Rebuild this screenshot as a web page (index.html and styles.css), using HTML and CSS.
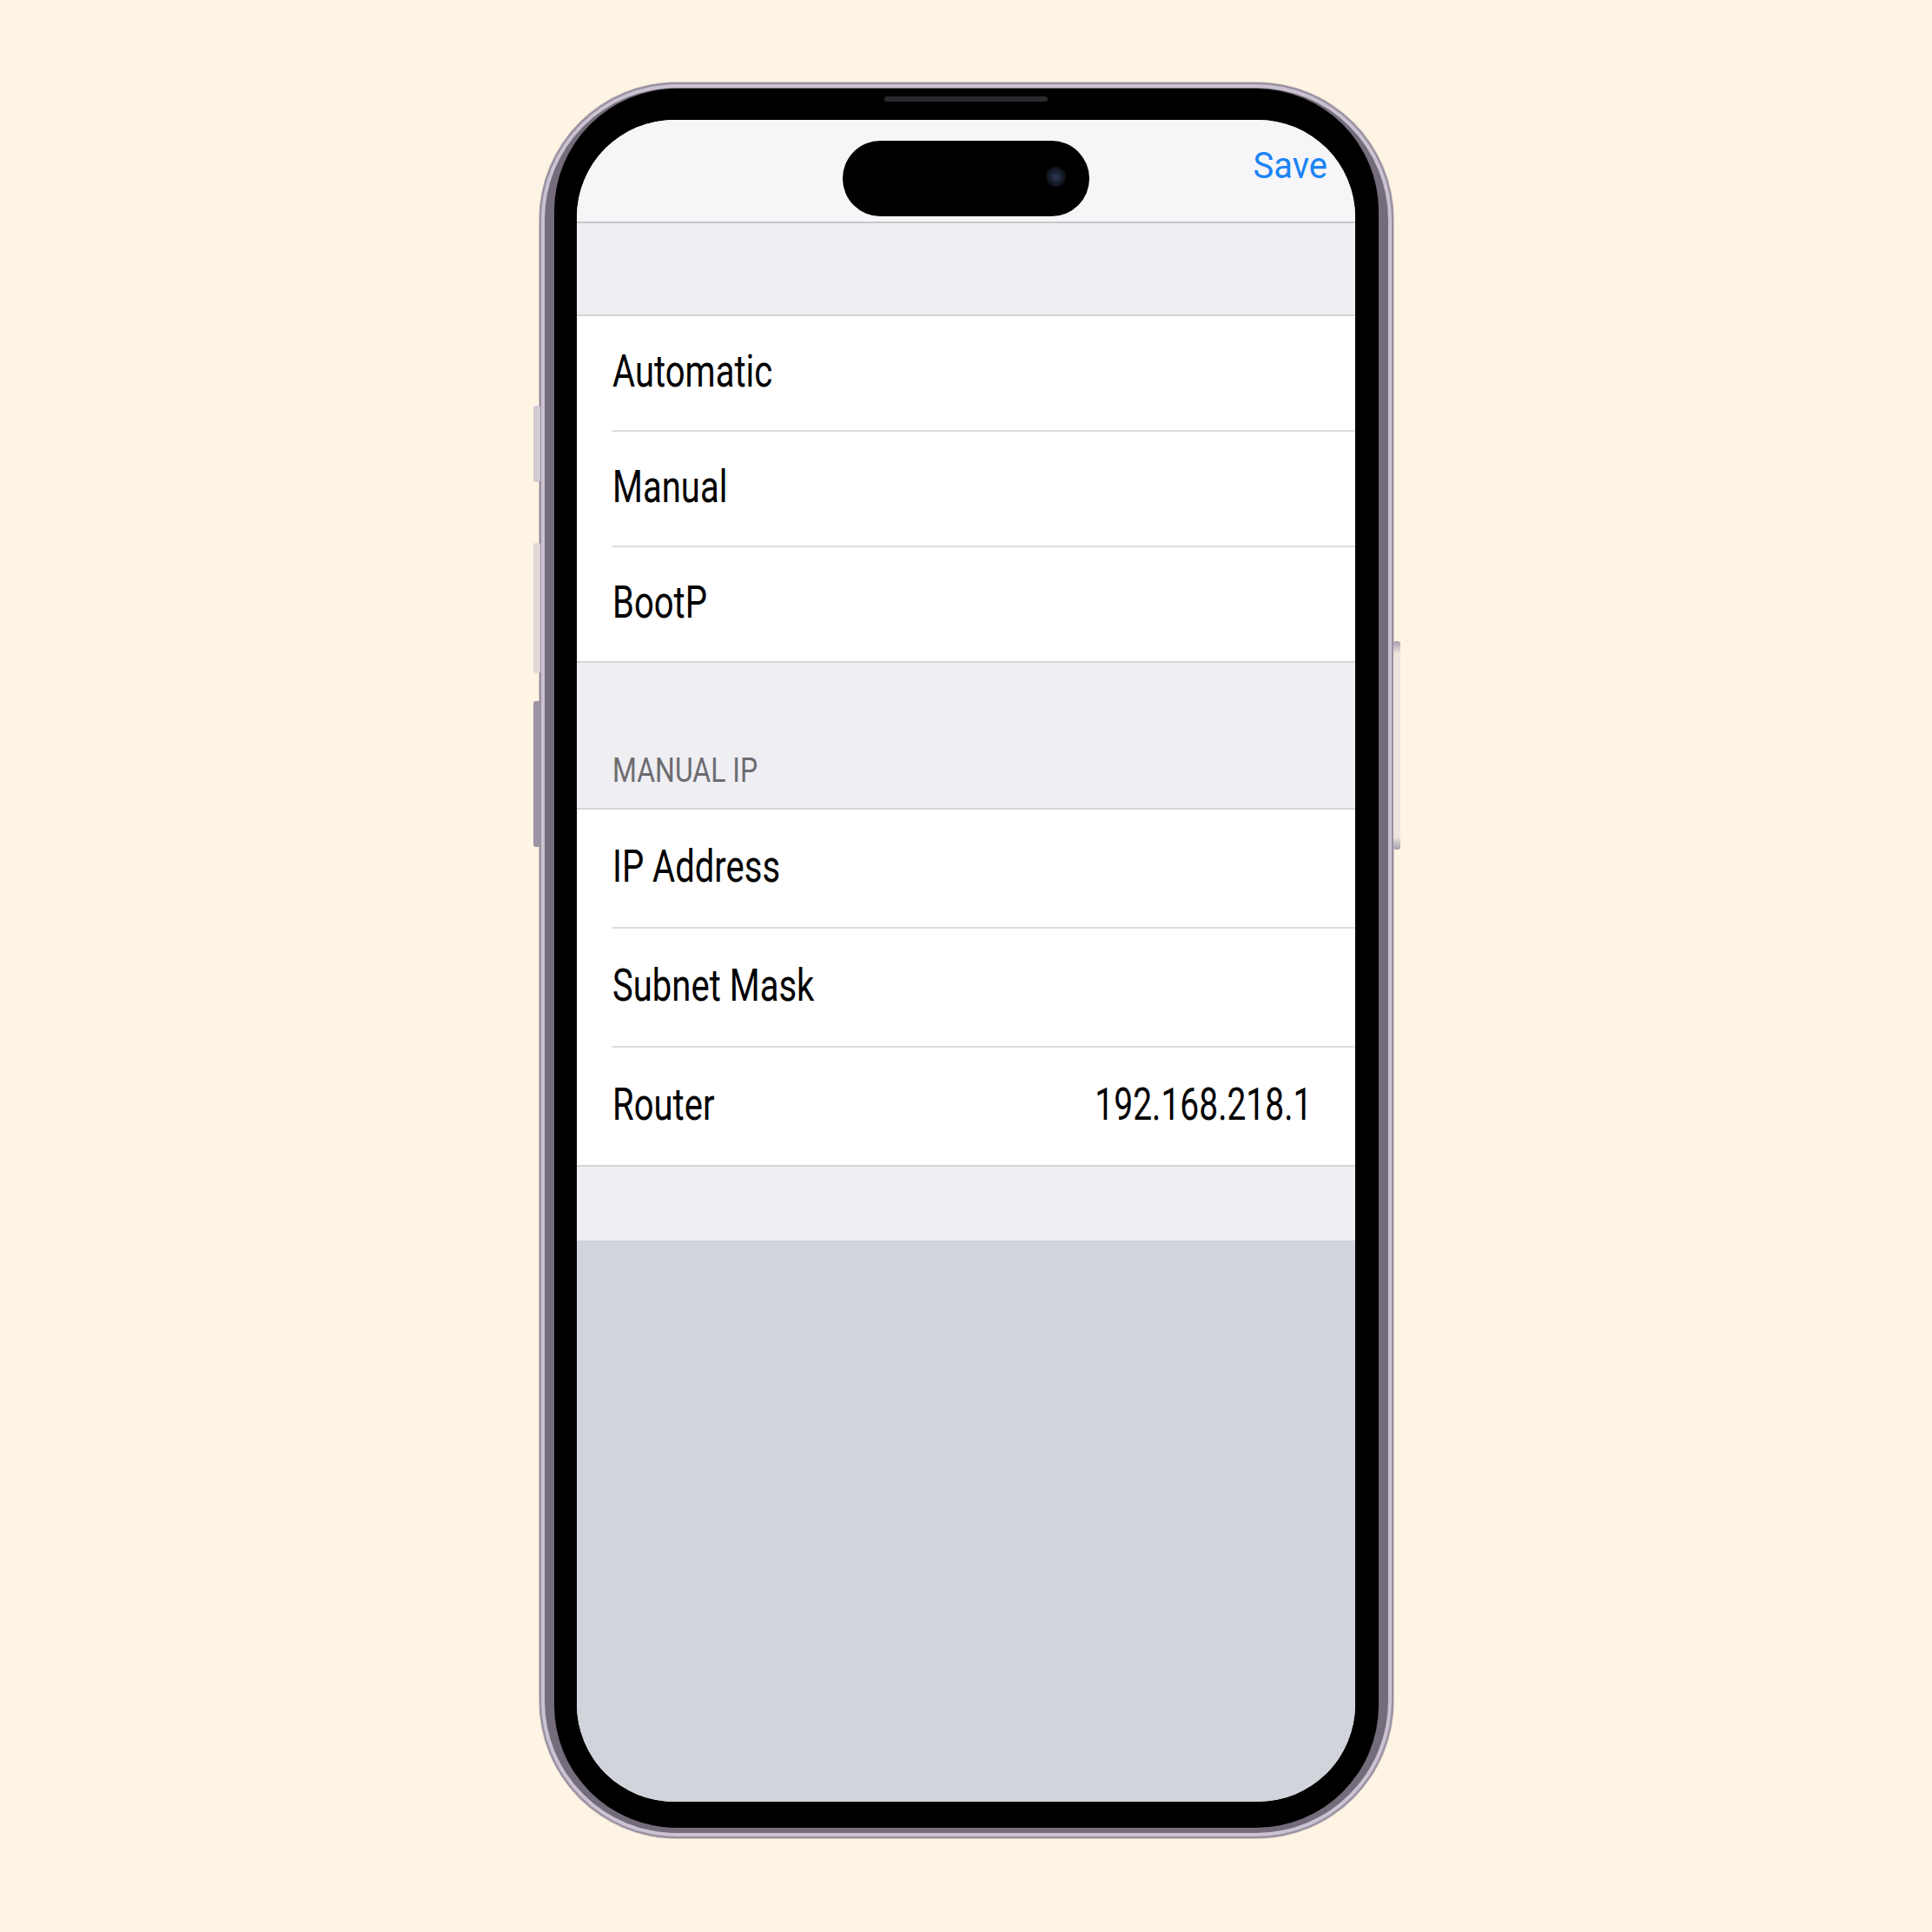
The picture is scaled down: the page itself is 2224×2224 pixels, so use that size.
FILE: index.html
```html
<!DOCTYPE html>
<html lang="en">
<head>
  <meta charset="UTF-8">
  <meta name="viewport" content="width=device-width, initial-scale=1.0">
  <link rel="stylesheet" href="styles.css">
  <title>Configure IPv4</title>
</head>
<body>
  <div class="phone">
    <!-- hardware buttons -->
    <span class="side-btn action"></span>
    <span class="side-btn vol-up"></span>
    <span class="side-btn vol-down"></span>
    <span class="side-btn power"></span>

    <div class="bezel">
      <span class="speaker"></span>
      <div class="screen">
        <div class="island"><span class="lens"></span></div>

        <div class="navbar">
          <span class="nav-save"><span class="txt">Save</span></span>
        </div>

        <div class="spacer top"></div>

        <div class="group">
          <div class="row"><div class="cell"><span class="txt">Automatic</span></div></div>
          <div class="row"><div class="cell"><span class="txt">Manual</span></div></div>
          <div class="row"><div class="cell"><span class="txt">BootP</span></div></div>
        </div>

        <div class="section-header"><span class="txt">MANUAL IP</span></div>

        <div class="group tall">
          <div class="row"><div class="cell"><span class="txt">IP Address</span></div></div>
          <div class="row"><div class="cell"><span class="txt">Subnet Mask</span></div></div>
          <div class="row">
            <div class="cell">
              <span class="txt">Router</span>
              <span class="txt value">192.168.218.1</span>
            </div>
          </div>
        </div>

        <div class="spacer bottom"></div>

        <!-- keyboard area, empty -->
        <div class="keyboard"></div>
      </div>
    </div>
  </div>
</body>
</html>
```

FILE: styles.css
```css
* {
  box-sizing: border-box;
}

body {
  margin: 0;
  min-height: 2224px;
  display: flex;
  justify-content: center;
  align-items: flex-start;
  padding-top: 95px;
  background-color: #fef4e4;
  font-family: Roboto, "Liberation Sans", sans-serif;
}

/* phone body */
.phone {
  position: relative;
  width: 983px;
  height: 2021px;
  padding: 7px 17px 12px 17px;
  border-radius: 158px;
  background-color: #746c7b;
  box-shadow:
    inset 0 0 0 2px #978f9e,
    inset 0 0 0 6px #cbc3d2,
    0 0 0 1px rgba(120, 110, 130, 0.35);
  display: flex;
}

.side-btn {
  position: absolute;
  width: 8px;
  border-radius: 3px;
}

.side-btn.action {
  left: -7px;
  top: 372px;
  height: 88px;
  background-color: #d3cbd3;
}

.side-btn.vol-up {
  left: -7px;
  top: 530px;
  height: 150px;
  background-color: #e0d9d8;
}

.side-btn.vol-down {
  left: -7px;
  top: 712px;
  height: 168px;
  background-color: #9d94a5;
}

.side-btn.power {
  right: -8px;
  top: 643px;
  height: 240px;
  background: linear-gradient(180deg, #a59dab 0, #ece5dd 6%, #ece5dd 94%, #a59dab 100%);
}

.bezel {
  position: relative;
  flex: 1;
  display: flex;
  padding: 36px 27px 30px 26px;
  border-radius: 141px;
  background-color: #000;
}

.speaker {
  position: absolute;
  top: 9px;
  left: 50%;
  width: 188px;
  height: 6px;
  margin-left: -94px;
  border-radius: 3px;
  background-color: #2a292d;
}

/* screen */
.screen {
  position: relative;
  flex: 1;
  display: flex;
  flex-direction: column;
  border-radius: 112px;
  overflow: hidden;
  background-color: #efeef3;
}

.island {
  position: absolute;
  top: 24px;
  left: 50%;
  width: 284px;
  height: 87px;
  margin-left: -142px;
  border-radius: 44px;
  background-color: #000;
}

.lens {
  position: absolute;
  top: 30px;
  left: 234px;
  width: 23px;
  height: 23px;
  border-radius: 50%;
  background: radial-gradient(circle, #2c3a55 0, #161d2b 45%, #000 100%);
}

.txt {
  display: inline-block;
  white-space: nowrap;
  transform: scaleX(0.77);
  transform-origin: left center;
}

.navbar {
  height: 119px;
  flex-shrink: 0;
  display: flex;
  justify-content: flex-end;
  align-items: flex-start;
  padding: 27px 32px 0 0;
  background-color: #f6f6f8;
  border-bottom: 2px solid #c7c7cb;
}

.nav-save {
  font-size: 43px;
  line-height: 50px;
  color: #1b84f5;
}

.nav-save .txt {
  transform: scaleX(0.93);
  transform-origin: right center;
}

.spacer {
  flex-shrink: 0;
}

.spacer.top {
  height: 105px;
}

.spacer.bottom {
  height: 85px;
}

/* grouped list */
.group {
  flex-shrink: 0;
  background-color: #fff;
  border-top: 2px solid #d5d5d9;
  border-bottom: 2px solid #d5d5d9;
}

.row {
  padding-left: 41px;
}

.cell {
  height: 133px;
  display: flex;
  align-items: center;
  justify-content: space-between;
  padding: 0 49px 4px 0;
  font-size: 52px;
  line-height: 62px;
  color: #000;
  border-bottom: 2px solid #dcdce0;
}

.row:last-child .cell {
  height: 131px;
  border-bottom: none;
}

.group.tall .cell {
  height: 137px;
}

.group.tall .row:last-child .cell {
  height: 135px;
}

.cell .value {
  transform: scaleX(0.75);
  transform-origin: right center;
}

.section-header {
  height: 167px;
  flex-shrink: 0;
  display: flex;
  align-items: flex-end;
  padding: 0 0 20px 41px;
  font-size: 39px;
  line-height: 46px;
  color: #6c6c71;
}

.section-header .txt {
  transform: scaleX(0.82);
}

.keyboard {
  flex: 1;
  background-color: #d1d4da;
}
```
